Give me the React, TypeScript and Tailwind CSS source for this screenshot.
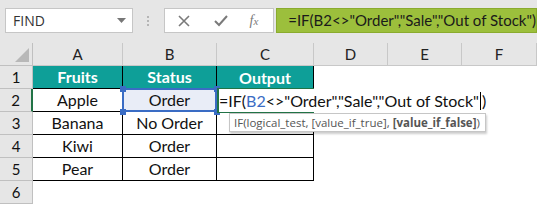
import React from "react";

const cellFont = { fontFamily: "Lato, 'Open Sans', sans-serif" };

function Handle({ pos }: { pos: string }) {
  return <div className={`absolute w-[6px] h-[6px] bg-[#3a6cc4] ${pos}`} />;
}

export default function App() {
  const cols = ["A", "B", "C", "D", "E", "F"];
  const data = [
    ["Banana", "No Order"],
    ["Kiwi", "Order"],
    ["Pear", "Order"],
  ];
  return (
    <div className="w-[537px] h-[207px] overflow-hidden bg-white relative" style={cellFont}>
      {/* toolbar */}
      <div className="h-[43px] bg-[#e6e6e6] flex items-start pt-[8px] pl-[5px]">
        <div className="w-[128px] h-[25px] bg-white border border-[#c6c6c6] flex items-center justify-between pl-[7px] pr-[6px]">
          <span className="text-[14px] text-[#333]" style={{ fontFamily: "'Open Sans', sans-serif" }}>FIND</span>
          <svg width="9" height="5" viewBox="0 0 9 5"><path d="M0 0h9L4.5 5z" fill="#777" /></svg>
        </div>
        <div className="w-[31px] h-[25px] flex flex-col items-center justify-center gap-[2px]">
          <div className="w-[2px] h-[2px] bg-[#b5b5b5]" />
          <div className="w-[2px] h-[2px] bg-[#b5b5b5]" />
          <div className="w-[2px] h-[2px] bg-[#b5b5b5]" />
        </div>
        <div className="h-[25px] w-[111px] bg-white border border-[#c6c6c6] flex items-center">
          <svg className="ml-[13px]" width="12" height="12" viewBox="0 0 12 12"><path d="M1 1l10 10M11 1L1 11" stroke="#7a7a7a" strokeWidth="1.6" /></svg>
          <svg className="ml-[24px]" width="14" height="12" viewBox="0 0 14 12"><path d="M1 6l4 4L13 1" stroke="#7a7a7a" strokeWidth="2" fill="none" /></svg>
          <span className="ml-[22px] text-[14px] italic text-[#7a7a7a]" style={{ fontFamily: "'Liberation Serif', serif" }}>f<span className="text-[11px]">x</span></span>
        </div>
        <div className="ml-[2px] h-[25px] flex-1 bg-[#9cbf3c] border border-[#8aab2e] flex items-center pl-[11px]">
          <span className="text-[15px] text-[#1a1a1a] whitespace-nowrap">=IF(B2&lt;&gt;"Order","Sale","Out of Stock")</span>
        </div>
      </div>

      {/* sheet grid */}
      <div className="grid grid-cols-[33px_90px_94px_97px_74px_74px_75px] grid-rows-[23px_23px_23px_23px_23px_23px_23px] text-[16px] text-[#111]">
        {/* header row */}
        <div className="bg-[#e6e6e6] border-r border-b border-[#c0c0c0] relative">
          <svg className="absolute right-[3px] bottom-[3px]" width="14" height="14" viewBox="0 0 14 14"><path d="M14 0V14H0z" fill="#b8b8b8" /></svg>
        </div>
        {cols.map((c) => (
          <div key={c} className="bg-[#e6e6e6] border-r border-b border-[#c8c8c8] flex items-center justify-center text-[15px] text-[#222]">{c}</div>
        ))}
        {/* row 1 */}
        <div className="bg-[#e6e6e6] border-r border-b border-[#c0c0c0] flex items-center justify-center text-[15px]">1</div>
        <div className="bg-[#0e9f98] border-r border-b border-black text-white font-bold flex items-center justify-center">Fruits</div>
        <div className="bg-[#0e9f98] border-r border-b border-black text-white font-bold flex items-center justify-center">Status</div>
        <div className="bg-[#0e9f98] border-r border-black text-white font-bold flex items-center justify-center">Output</div>
        <div /><div /><div />
        {/* row 2 */}
        <div className="bg-[#e6e6e6] border-r-2 border-r-[#217346] border-b border-b-[#c0c0c0] flex items-center justify-center text-[15px]">2</div>
        <div className="border-r border-b border-black flex items-center justify-center">Apple</div>
        <div className="border-b border-black relative">
          <div className="absolute left-[-1px] top-[-1px] right-0 bottom-[-1px] border-2 border-[#3a6cc4] bg-[#e9edf7] flex items-center justify-center">Order</div>
          <Handle pos="left-[-3px] top-[-3px]" />
          <Handle pos="right-[-3px] top-[-3px]" />
          <Handle pos="left-[-3px] bottom-[-4px]" />
          <Handle pos="right-[-3px] bottom-[-4px]" />
        </div>
        <div className="relative">
          <div className="absolute left-0 top-[-1px] right-0 bottom-[-1px] border-l-2 border-t-2 border-b-2 border-[#217346]" />
          <div className="absolute right-[0px] bottom-[-3px] w-[5px] h-[5px] bg-[#217346]" />
          <div className="absolute left-[2px] top-0 bottom-0 flex items-center whitespace-nowrap z-10 bg-white pr-[2px]">
            =IF(<span className="text-[#3a6cc4]">B2</span>&lt;&gt;"Order","Sale","Out of Stock"<span className="inline-block w-[1px] h-[18px] bg-black mx-[1px]" />)
          </div>
        </div>
        <div /><div /><div />
        {/* rows 3-5 */}
        {data.map((r, i) => (
          <React.Fragment key={i}>
            <div className="bg-[#e6e6e6] border-r border-b border-[#c0c0c0] flex items-center justify-center text-[15px]">{i + 3}</div>
            <div className="border-r border-b border-black flex items-center justify-center">{r[0]}</div>
            <div className="border-r border-b border-black flex items-center justify-center">{r[1]}</div>
            <div className="border-r border-b border-black" />
            <div /><div /><div />
          </React.Fragment>
        ))}
        {/* row 6 */}
        <div className="bg-[#e6e6e6] border-r border-b border-[#c0c0c0] flex items-center justify-center text-[15px]">6</div>
        <div /><div /><div /><div /><div /><div />
      </div>

      {/* tooltip */}
      <div className="absolute left-[229px] top-[113px] w-[257px] h-[19px] bg-white border border-[#c6c6c6] shadow-[1px_2px_2px_rgba(0,0,0,0.2)] flex items-center pl-[4px] text-[11.5px] text-[#555] whitespace-nowrap z-20" style={{ fontFamily: "'Open Sans', sans-serif" }}>
        IF(logical_test, [value_if_true], <span className="font-bold ml-[3px]">[value_if_false]</span>)
      </div>
    </div>
  );
}
